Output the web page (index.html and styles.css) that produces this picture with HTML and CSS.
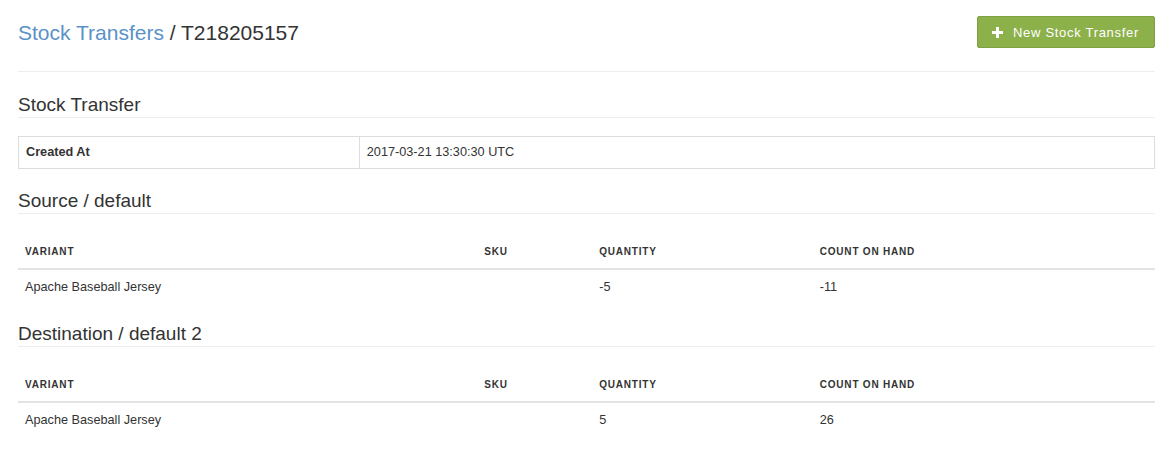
FILE: index.html
```html
<!DOCTYPE html>
<html>
<head>
<meta charset="utf-8">
<link rel="stylesheet" href="styles.css">
</head>
<body>
<div class="page">
  <header class="page-header">
    <h1 class="page-title"><a href="#" class="crumb">Stock Transfers</a> / T218205157</h1>
    <a href="#" class="btn-success">
      <svg class="plus" width="11" height="11" viewBox="0 0 11 11"><path d="M4 0h3v4h4v3H7v4H4V7H0V4h4z" fill="#fff"/></svg>
      <span>New Stock Transfer</span>
    </a>
  </header>

  <section class="block first">
    <h2 class="section-title">Stock Transfer</h2>
    <table class="info">
      <tr>
        <th class="info-label">Created At</th>
        <td>2017-03-21 13:30:30 UTC</td>
      </tr>
    </table>
  </section>

  <section class="block">
    <h2 class="section-title">Source / default</h2>
    <table class="items">
      <thead>
        <tr><th class="c-variant">Variant</th><th class="c-sku">SKU</th><th class="c-qty">Quantity</th><th class="c-count">Count On Hand</th></tr>
      </thead>
      <tbody>
        <tr><td>Apache Baseball Jersey</td><td></td><td>-5</td><td>-11</td></tr>
      </tbody>
    </table>
  </section>

  <section class="block">
    <h2 class="section-title">Destination / default 2</h2>
    <table class="items">
      <thead>
        <tr><th class="c-variant">Variant</th><th class="c-sku">SKU</th><th class="c-qty">Quantity</th><th class="c-count">Count On Hand</th></tr>
      </thead>
      <tbody>
        <tr><td>Apache Baseball Jersey</td><td></td><td>5</td><td>26</td></tr>
      </tbody>
    </table>
  </section>
</div>
</body>
</html>
```

FILE: styles.css
```css
html, body {
  margin: 0;
  padding: 0;
  background: #fff;
}
body {
  font-family: "Liberation Sans", Arial, Helvetica, sans-serif;
  color: #333;
  font-size: 13px;
}
.page {
  padding: 16px 21px 0 18px;
}
.page-header {
  display: flex;
  justify-content: space-between;
  align-items: center;
  height: 32px;
  padding-bottom: 23px;
  border-bottom: 1px solid #eee;
}
.page-title {
  margin: 0;
  padding-top: 2px;
  font-size: 21px;
  font-weight: normal;
  line-height: 34px;
  color: #333;
}
.crumb {
  color: #5a92c8;
  text-decoration: none;
}
.btn-success {
  display: flex;
  align-items: center;
  gap: 10px;
  box-sizing: border-box;
  height: 32px;
  padding: 0 15px 0 14px;
  background: #8cb04a;
  border: 1px solid #7ea043;
  border-radius: 2px;
  color: #fff;
  text-decoration: none;
  font-size: 13px;
  letter-spacing: 0.7px;
}
.plus {
  display: block;
}
.block {
  margin-top: 21px;
}
.block.first {
  margin-top: 22px;
}
.section-title {
  margin: 0;
  font-size: 19px;
  font-weight: normal;
  line-height: 22px;
  padding-bottom: 1px;
  border-bottom: 1px solid #eee;
  color: #333;
}
table {
  width: 100%;
  border-collapse: collapse;
  margin-top: 18px;
}
.info {
  border: 1px solid #ddd;
}
.info th, .info td {
  text-align: left;
  padding: 8px 7px;
  height: 15px;
  line-height: 15px;
  font-size: 12.7px;
  border: 1px solid #ddd;
}
.info-label {
  width: 30%;
  font-weight: bold;
}
.items th {
  text-align: left;
  font-size: 10px;
  font-weight: bold;
  letter-spacing: 0.8px;
  text-transform: uppercase;
  line-height: 18px;
  padding: 11px 7px 7px 7px;
  border-bottom: 2px solid #e4e4e4;
}
.items td {
  line-height: 18px;
  padding: 8px 7px 6px 7px;
  font-size: 12.7px;
}
.c-variant { width: 40.4%; }
.c-sku { width: 10.1%; }
.c-qty { width: 19.4%; }
.c-count { width: 30.1%; }
```
